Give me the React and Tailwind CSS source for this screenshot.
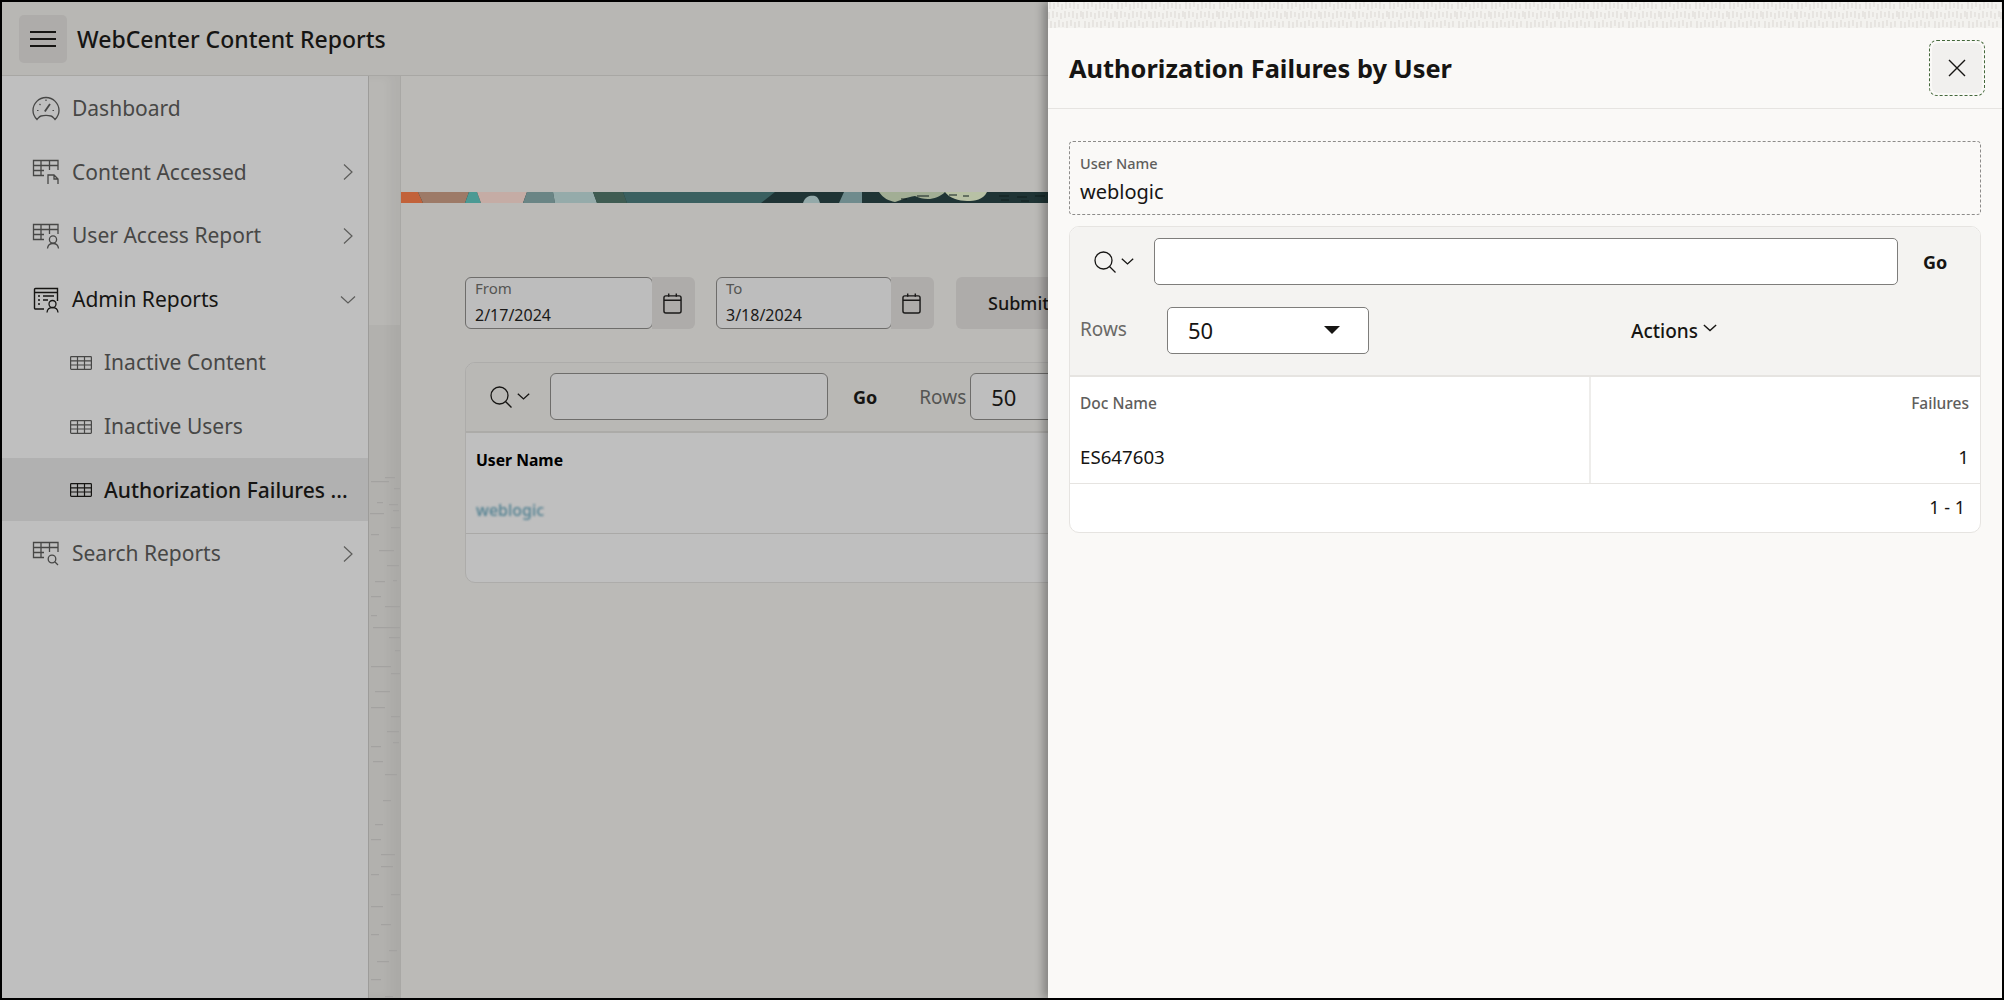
import React from "react";

const Chevron = ({ dir = "right", className = "", sw = 1.2 }) => (
  <svg viewBox="0 0 16 16" fill="none" stroke="currentColor" strokeWidth={sw} className={className}>
    {dir === "right" ? <path d="M4 0.5L12 8 4 15.5" /> : <path d="M1 4.5l7 6.5 7-6.5" />}
  </svg>
);

const TableBase = () => (
  <path d="M12 16.5H1.5V1.5H26V11M1.5 6.5H26M1.5 11.5H12M9 1.5V16.5M17.5 1.5V11" />
);

const IconGauge = () => (
  <svg viewBox="0 0 28 26" fill="none" stroke="currentColor" strokeWidth="1.3" className="w-[28px] h-[26px]">
    <path d="M5 23.5C2.5 21 1 18 1 14.5 1 7.5 6.8 1.5 14 1.5s13 6 13 13c0 3.5-1.5 6.5-4 9-1.5-1.5-2-3-4-3.5-3-.7-7-.7-10 0-2 .5-2.5 2-4 3.5Z" />
    <path d="M12.8 15.5L18 8" strokeWidth="1.8" />
    <path d="M14 3.5v1.5M5 14.5h1.5M22 14.5h-1.5M7.5 8l1 1" strokeWidth="1.2" />
  </svg>
);
const IconTablePage = () => (
  <svg viewBox="0 0 28 26" fill="none" stroke="currentColor" strokeWidth="1.3" className="w-[28px] h-[26px]">
    <TableBase />
    <path d="M16 25v-9h6l4 4v5M22 16v4h4" />
  </svg>
);
const IconTableUser = () => (
  <svg viewBox="0 0 28 26" fill="none" stroke="currentColor" strokeWidth="1.3" className="w-[28px] h-[26px]">
    <TableBase />
    <circle cx="21" cy="16.5" r="3.6" />
    <path d="M15.5 25.5c.3-3.2 2.3-5 5.5-5s5.2 1.8 5.5 5" />
  </svg>
);
const IconAdmin = () => (
  <svg viewBox="0 0 28 26" fill="none" stroke="currentColor" strokeWidth="1.3" className="w-[28px] h-[26px]">
    <path d="M12 22H3.5a1 1 0 0 1-1-1V2.5a1 1 0 0 1 1-1H25.5V14M2.5 5.5h23" strokeWidth="1.4" />
    <path d="M6 9h2M11 9h11M6 13h2M11 13h5M6 17h2" strokeWidth="1.6" />
    <circle cx="20.5" cy="17" r="3.5" />
    <path d="M15 25.5c.3-3 2.3-4.8 5.5-4.8s5.2 1.8 5.5 4.8" />
  </svg>
);
const IconTableSearch = () => (
  <svg viewBox="0 0 28 26" fill="none" stroke="currentColor" strokeWidth="1.3" className="w-[28px] h-[26px]">
    <TableBase />
    <circle cx="20" cy="18" r="3.8" />
    <path d="M23 21l3 3" />
  </svg>
);
const IconGrid = () => (
  <svg viewBox="0 0 22 14" fill="none" stroke="currentColor" strokeWidth="1.2" className="w-[22px] h-[14px]">
    <rect x="0.6" y="0.6" width="20.8" height="12.8" rx="0.8" />
    <path d="M0.6 4.8h20.8M0.6 9h20.8M7.5 0.6v12.8M14.5 0.6v12.8" />
  </svg>
);
const IconCalendar = () => (
  <svg viewBox="0 0 20 22" fill="none" stroke="currentColor" strokeWidth="1.5" className="w-[19px] h-[21px]">
    <rect x="1" y="3" width="18" height="18" rx="2" />
    <path d="M1 7.5h18M6 .5V4M14 .5V4" />
  </svg>
);
const IconSearch = () => (
  <svg viewBox="0 0 22 22" fill="none" stroke="currentColor" strokeWidth="1.3" className="w-[22px] h-[22px]">
    <circle cx="9.5" cy="9.5" r="8.5" />
    <path d="M15.5 15.5l6 6" />
  </svg>
);

const NAV = [
  { label: "Dashboard", icon: <IconGauge /> },
  { label: "Content Accessed", icon: <IconTablePage />, chev: "right" },
  { label: "User Access Report", icon: <IconTableUser />, chev: "right" },
  { label: "Admin Reports", icon: <IconAdmin />, chev: "down", open: true },
  { label: "Inactive Content", child: true },
  { label: "Inactive Users", child: true },
  { label: "Authorization Failures ...", child: true, active: true },
  { label: "Search Reports", icon: <IconTableSearch />, chev: "right" },
];

const NavRow = ({ item }) => (
  <div
    className={`h-[63.6px] pt-[2px] flex items-center text-[21px] ${item.active ? "bg-[#b1b1b1] font-medium" : ""} ${
      item.active || item.open ? "text-[#161513]" : "text-[#474746]"
    }`}
  >
    {item.child ? (
      <div className="ml-[68px] w-[34px] flex">
        <IconGrid />
      </div>
    ) : (
      <div className="ml-[30px] w-[40px] flex">{item.icon}</div>
    )}
    <span className="whitespace-nowrap">{item.label}</span>
    {item.chev === "right" && <Chevron className="w-4 h-4 ml-auto mr-[12px] text-[#5c5c5a]" />}
    {item.chev === "down" && <Chevron dir="down" className="w-4 h-4 ml-auto mr-[12px] text-[#5c5c5a]" />}
  </div>
);

const Ribbon = () => (
  <svg viewBox="0 0 648 11" preserveAspectRatio="none" className="block w-[648px] h-[11px]">
    <rect width="648" height="11" fill="#1f3435" />
    <polygon points="0,0 17,0 22,11 0,11" fill="#c2623a" />
    <polygon points="17,0 68,0 64,11 22,11" fill="#9d7a67" />
    <polygon points="68,0 76,0 80,11 64,11" fill="#4b9a94" />
    <polygon points="76,0 126,0 122,11 80,11" fill="#c5aca5" />
    <polygon points="126,0 152,0 154,11 122,11" fill="#6a8585" />
    <polygon points="152,0 192,0 196,11 154,11" fill="#95abaa" />
    <polygon points="192,0 222,0 226,11 196,11" fill="#3f5c52" />
    <polygon points="222,0 374,0 360,11 226,11" fill="#3a6060" />
    <path d="M402 11c2-7 8-8 12-7 3 1 4 4 5 7z" fill="#93a9a9" />
    <polygon points="443,0 461,0 461,11 438,11" fill="#6f8b8d" />
    <path d="M478 0h66c-8 8-20 9-30 4-8 1-16 5-20 6-6-1-12-4-16-10z" fill="#a2ae95" />
    <path d="M544 0h42c-4 8-12 9-20 9s-18-3-22-9z" fill="#b8c1a5" />
    <path d="M516 4h12M548 3h8M562 4h6M598 4h10M616 5h10M634 4h10M600 8h8M620 9h8M500 7h6" stroke="#111f1f" strokeWidth="1" />
  </svg>
);

const DateField = ({ label, value, w }) => (
  <div className="flex">
    <div className={`${w} h-[52px] rounded-[6px] border-[1.5px] border-[#6e6d6b] bg-[#bdbdbd] pl-[9px] flex flex-col`}>
      <span className="text-[15px] leading-[20px] text-[#555553]">{label}</span>
      <span className="text-[16px] leading-[24px] mt-[5px] text-[#1a1918]">{value}</span>
    </div>
    <div className="w-[43px] h-[52px] -ml-px rounded-r-[6px] bg-[#aeacaa] flex items-center justify-center text-[#1a1918] pr-[2px]">
      <IconCalendar />
    </div>
  </div>
);

const GUTTER_MARKS = [
  [2, 7, 18], [16, 3, 10], [25, 14, 8], [8, 28, 6], [20, 30, 9], [1, 39, 14], [24, 36, 6], [22, 53, 9], [2, 60, 8],
  [10, 76, 15], [18, 91, 12], [6, 107, 10], [24, 106, 4], [2, 122, 10], [16, 132, 16], [2, 141, 6], [4, 153, 28], [20, 163, 12],
  [26, 176, 5], [2, 192, 20], [22, 199, 10], [6, 217, 15], [2, 233, 14], [22, 242, 10], [18, 257, 12], [2, 272, 10], [24, 268, 6],
  [4, 287, 10], [16, 300, 12], [14, 326, 8], [6, 350, 8], [2, 365, 10], [12, 380, 14], [2, 400, 8], [12, 392, 12], [22, 420, 10],
  [2, 432, 12], [12, 450, 10], [2, 460, 8], [20, 476, 8], [8, 487, 12], [2, 505, 10], [16, 522, 8], [2, 532, 10], [10, 545, 14],
];

const Gutter = () => (
  <div className="w-[32px] shrink-0 border-r border-[#a9a8a5] bg-[linear-gradient(180deg,#b8b7b4_0,#b8b7b4_249px,#b2b1ae_249px)] shadow-[inset_-10px_0_10px_rgba(0,0,0,0.04)] relative">
    <svg viewBox="0 0 31 550" className="absolute left-0 top-[398px] w-[31px] h-[550px] blur-[0.4px]">
      {GUTTER_MARKS.map(([x, y, w], i) => (
        <rect key={i} x={x} y={y} width={w} height="1.2" fill="#a3a2a0" />
      ))}
    </svg>
  </div>
);

const PatternStrip = () => (
  <svg className="block w-full h-[26px] bg-[#f3f2ef]">
    <defs>
      <pattern id="strip" width="34" height="26" patternUnits="userSpaceOnUse">
        <path
          d="M2 0v7M6 1v6M10 0v5M14 2v6M18 0v7M22 1v5M26 0v7M30 2v5M1 10v7M5 9v7M9 10v5M13 11v6M17 9v7M21 10v5M25 9v7M29 11v6M33 9v6M3 19v7M7 20v6M11 18v7M15 20v5M19 19v7M23 18v6M27 20v6M31 19v6"
          stroke="#e4e2de"
          strokeWidth="1.6"
        />
      </pattern>
    </defs>
    <rect width="100%" height="100%" fill="url(#strip)" />
  </svg>
);

export default function App() {
  return (
    <div className="w-[2004px] h-[1000px] border-2 border-black bg-[#bbbab7] relative overflow-hidden font-['Noto_Sans',sans-serif] text-[#161513]">
      <div className="h-[73px] bg-[#b8b7b4] border-b border-[#a8a7a4] flex items-center box-content">
        <div className="ml-[17px] mt-[1px] w-12 h-12 rounded-[5px] bg-[#aeacaa] flex flex-col items-center justify-center gap-[4.5px]">
          <div className="w-[26px] h-[2.5px] bg-[#161513]" />
          <div className="w-[26px] h-[2.5px] bg-[#161513]" />
          <div className="w-[26px] h-[2.5px] bg-[#161513]" />
        </div>
        <div className="ml-[10px] mt-[2px] text-[23px] font-medium whitespace-nowrap">WebCenter Content Reports</div>
      </div>

      <div className="flex h-[922px]">
        <aside className="w-[367px] shrink-0 bg-[#bfbfbf] border-r border-[#9d9c9a]">
          {NAV.map((item) => (
            <NavRow key={item.label} item={item} />
          ))}
        </aside>
        <Gutter />
        <main className="flex-1 overflow-hidden">
          <div className="mt-[116px]">
            <Ribbon />
          </div>
          <div className="mt-[74px] pl-[64px] flex w-[1200px]">
            <DateField label="From" value="2/17/2024" w="w-[188px]" />
            <div className="w-[21px]" />
            <DateField label="To" value="3/18/2024" w="w-[176px]" />
            <div className="ml-[22px] w-[150px] h-[52px] rounded-[6px] bg-[#aeacaa] pl-[32px] flex items-center text-[18px] font-medium text-[#161513]">
              Submit
            </div>
          </div>
          <div className="mt-[33px] ml-[64px] w-[1000px] h-[221px] rounded-[10px] border border-[#adacaa] bg-[#bfbfbf] overflow-hidden">
            <div className="h-[70px] pb-[1px] bg-[#b9b8b5] border-b-2 border-[#acaba8] flex items-center">
              <div className="ml-[24px] flex items-center w-[60px]">
                <IconSearch />
                <Chevron dir="down" sw={1.6} className="w-[13px] h-[13px] ml-[5px]" />
              </div>
              <div className="w-[278px] h-[47px] rounded-[6px] border-[1.5px] border-[#6e6d6b] bg-[#bebebe]" />
              <span className="ml-[25px] mt-[2px] text-[18px] font-bold">Go</span>
              <span className="ml-[42px] mt-[2px] text-[19px] text-[#555553]">Rows</span>
              <div className="ml-[4px] w-[200px] h-[47px] rounded-[6px] border-[1.5px] border-[#6e6d6b] bg-[#bebebe] pl-[20px] pt-[2px] flex items-center text-[22px]">
                50
              </div>
            </div>
            <div className="h-[101px] border-b border-[#aaa9a7] pl-[10px] flex flex-col">
              <span className="text-[15.7px] font-bold mt-[14px] leading-[26px] text-black">User Name</span>
              <span className="mt-[24px] text-[16px] leading-[26px] text-[#4f7f90] blur-[1.2px] font-medium">weblogic</span>
            </div>
          </div>
        </main>
      </div>

      <section className="absolute top-0 right-0 bottom-0 w-[954px] bg-[#faf9f7] shadow-[-5px_0_8px_rgba(0,0,0,0.28)]">
        <PatternStrip />
        <div className="h-[80px] border-b border-[#e6e4e1] flex items-center box-content">
          <h1 className="ml-[21px] mt-[1px] text-[25.4px] font-bold text-[#161513]">Authorization Failures by User</h1>
          <button className="ml-auto mr-[17px] w-[56px] h-[56px] rounded-[8px] border-[1.5px] border-dashed border-[#44683b] p-[2px]">
            <div className="w-full h-full rounded-[6px] bg-[#f1f0ee] flex items-center justify-center">
              <svg viewBox="0 0 20 20" fill="none" stroke="#161513" strokeWidth="1.4" className="w-[20px] h-[20px]">
                <path d="M2 2l16 16M18 2L2 18" />
              </svg>
            </div>
          </button>
        </div>
        <div className="px-[21px] pt-[32px]">
          <div className="w-[912px] h-[74px] rounded-[4px] border-[1.5px] border-dashed border-[#8d8c8a] pl-[10px] flex flex-col">
            <span className="text-[14.5px] leading-[20px] mt-[11px] font-medium text-[#5f5e5c]">User Name</span>
            <span className="text-[20px] leading-[30px] mt-[4px] text-[#161513]">weblogic</span>
          </div>
          <div className="mt-[11px] w-[912px] h-[307px] rounded-[10px] border border-[#e6e4e1] overflow-hidden bg-white">
            <div className="h-[150px] bg-[#f4f3f1] border-b-2 border-[#e6e4e1] pt-[11px]">
              <div className="h-[47px] flex items-center">
                <div className="ml-[24px] flex items-center w-[60px]">
                  <IconSearch />
                  <Chevron dir="down" sw={1.6} className="w-[13px] h-[13px] ml-[5px]" />
                </div>
                <div className="w-[744px] h-[47px] rounded-[5px] border-[1.5px] border-[#7e7d7b] bg-white" />
                <span className="ml-[25px] mt-[2px] text-[18px] font-bold text-[#161513]">Go</span>
              </div>
              <div className="h-[46px] mt-[22px] flex items-center">
                <span className="ml-[10px] w-[87px] -mt-[1px] text-[19px] text-[#6a6967]">Rows</span>
                <div className="w-[202px] h-[47px] rounded-[5px] border border-[#7e7d7b] bg-white pl-[20px] pr-[28px] flex items-center justify-between text-[22px]">
                  50
                  <div className="w-0 h-0 border-l-[8px] border-r-[8px] border-t-[8px] border-l-transparent border-r-transparent border-t-[#161513]" />
                </div>
                <div className="ml-[262px] mt-[2px] flex items-center text-[19px] font-medium text-[#161513]">
                  Actions
                  <Chevron dir="down" sw={1.6} className="w-[14px] h-[14px] ml-[5px] -mt-[6px]" />
                </div>
              </div>
            </div>
            <div className="grid grid-cols-[521px_1fr] h-[107px] border-b border-[#e6e4e1] text-[#161513]">
              <div className="border-r-2 border-[#eeedeb] pl-[10px] flex flex-col">
                <span className="mt-[14px] leading-[24px] text-[15.5px] font-medium text-[#5f5e5c]">Doc Name</span>
                <span className="mt-[28px] leading-[28px] text-[18.7px]">ES647603</span>
              </div>
              <div className="pr-[11px] flex flex-col items-end">
                <span className="mt-[14px] leading-[24px] text-[15.5px] font-medium text-[#5f5e5c]">Failures</span>
                <span className="mt-[28px] leading-[28px] text-[18.7px]">1</span>
              </div>
            </div>
            <div className="h-[47px] pr-[15px] flex items-center justify-end text-[18px] text-[#161513]">1 - 1</div>
          </div>
        </div>
      </section>
    </div>
  );
}
